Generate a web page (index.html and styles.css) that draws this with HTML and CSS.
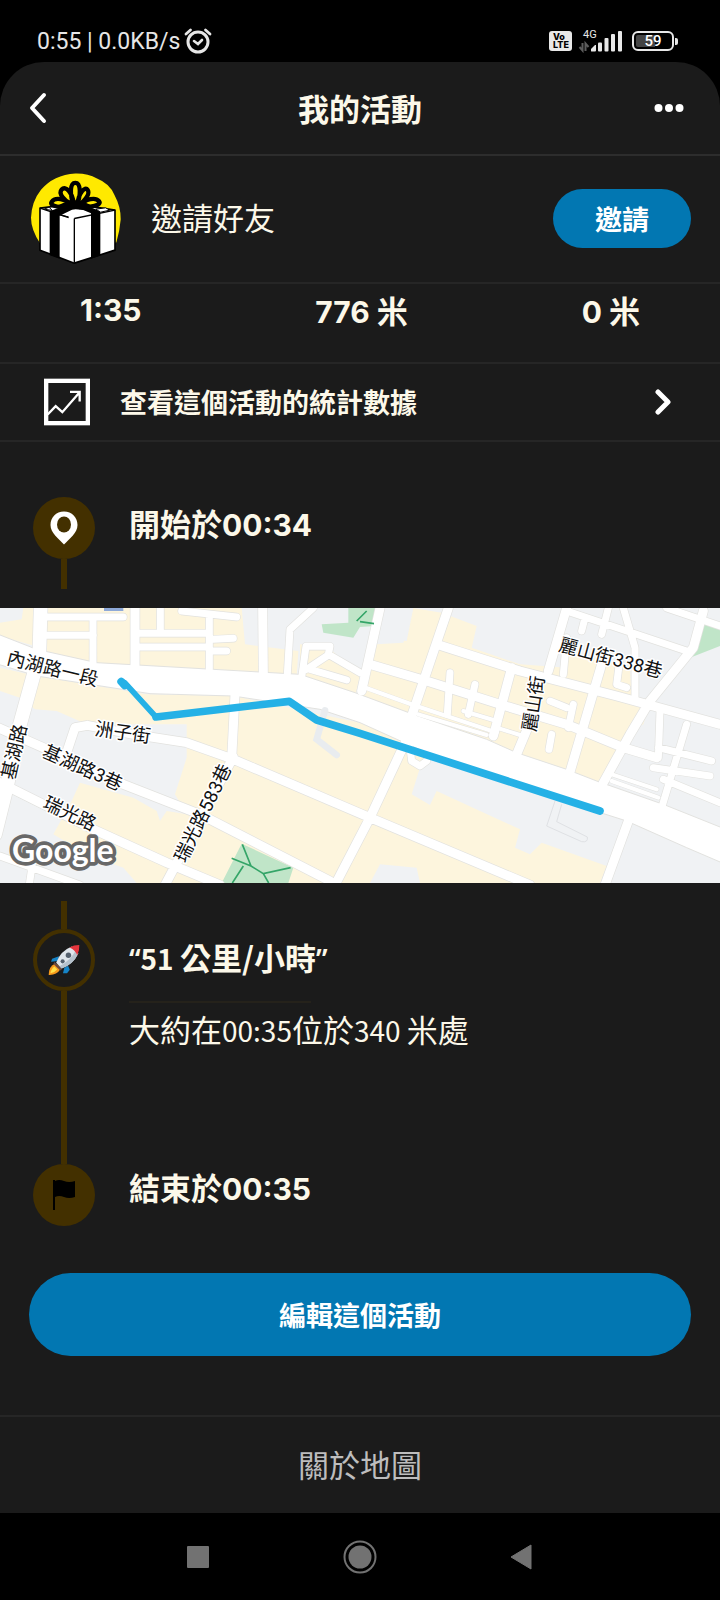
FILE: index.html
```html
<!DOCTYPE html>
<html lang="zh-Hant">
<head>
<meta charset="utf-8">
<meta name="viewport" content="width=device-width, initial-scale=1">
<title>我的活動</title>
<link rel="stylesheet" href="styles.css">
</head>
<body>
<div class="status">
  <div class="status-left">
    <span>0:55 | 0.0KB/s</span>
    <svg width="28" height="26" viewBox="0 0 28 26" fill="none" stroke="#e6e6e6" stroke-width="3" stroke-linecap="round"><circle cx="14" cy="14" r="10"/><path d="M10 13l4 3 4-4" stroke-width="2.6"/><path d="M2 6l4.500-4M26 6l-4.500-4" stroke-width="2.800"/></svg>
  </div>
  <div class="status-right">
    <span class="volte"><span>Vo</span><span>LTE</span></span>
    <svg class="signal" width="46" height="24" viewBox="0 0 46 24">
      <text x="5" y="9" class="signal-text">4G</text>
      <g fill="#e8e8e8"><path d="M13 22v-2l4-4h1v5.500q0 1-1 1h-3q-1 0-1-.5z"/><rect x="20" y="13.500" width="4" height="9" rx="1"/><rect x="26.500" y="9" width="4" height="13.500" rx="1"/><rect x="33" y="5" width="4" height="17.500" rx="1"/><rect x="40" y="2" width="4" height="20.500" rx="1"/></g>
      <path d="M4.500 14v7.500L1.500 18M7.500 22v-7.500L10.500 18" fill="none" stroke="#5c5c5c" stroke-width="2"/>
    </svg>
    <span class="battery">59</span>
  </div>
</div>

<main class="app">
  <header class="topbar">
    <button class="icon-btn" aria-label="返回"><svg width="20" height="32" viewBox="0 0 20 32"><path d="M16 3L4 16l12 13" fill="none" stroke="#fff" stroke-width="4" stroke-linecap="round" stroke-linejoin="round"/></svg></button>
    <h1 class="title">我的活動</h1>
    <button class="icon-btn icon-btn-end" aria-label="更多"><svg width="30" height="10" viewBox="0 0 30 10" fill="#fff"><circle cx="4.500" cy="5" r="4"/><circle cx="15" cy="5" r="4"/><circle cx="25.500" cy="5" r="4"/></svg></button>
  </header>

  <section class="invite">
    <svg width="90" height="91" viewBox="92 70 270 272">
      <path d="M225 71Q262 70 290 86Q328 101 342 135Q362 172 361 210Q358 245 348 278L120 282Q92 240 92 204Q94 155 122 120Q160 75 225 71Z" fill="#ffe900"/>
      <path d="M119 175L222 162L344 181V301L222 340L119 301Z" fill="#fff" stroke="#000" stroke-width="5" stroke-linejoin="round"/>
      <path d="M148 184L200 165L215 180L178 198V327L148 316ZM272 190L238 176L258 168L300 184V317L272 327Z"/>
      <path d="M119 175L205 203M222 206V338M222 206L344 181" fill="none" stroke="#000" stroke-width="4"/>
      <path d="M132 178l24 4-10-10zM180 196l24 5M286 178l30-4 12 7-27 6z" fill="#fff" stroke="#000" stroke-width="3"/>
      <path d="M223 172C206 135 209 99 225 99S244 135 227 172M216 168C194 153 172 132 184 119S216 128 220 160M232 162C234 130 254 108 262 120S254 151 234 168M214 172C185 174 145 170 154 156S193 145 218 166M234 170C258 145 286 142 296 154S270 174 236 172" fill="none" stroke="#000" stroke-width="13"/>
      <path d="M177 165Q222 137 270 165L276 183L226 178L172 186Z"/>
    </svg>
    <span class="invite-label">邀請好友</span>
    <button class="pill">邀請</button>
  </section>

  <section class="stats">
    <span class="num">1:35</span>
    <span><b class="num">776</b> 米</span>
    <span><b class="num">0</b> 米</span>
  </section>

  <a class="stats-link" href="#">
    <svg width="46" height="48" viewBox="132 687 138 141"><rect x="138.500" y="694" width="125" height="127" fill="none" stroke="#fff" stroke-width="13"/><path d="M143 795L167 770L187 788L239 728M210 727H239V756" fill="none" stroke="#fff" stroke-width="7"/></svg>
    <span class="stats-text">查看這個活動的統計數據</span>
    <svg width="16" height="26" viewBox="0 0 16 26"><path d="M3 3l10 10L3 23" fill="none" stroke="#fff" stroke-width="5" stroke-linecap="round" stroke-linejoin="round"/></svg>
  </a>

  <section class="entry entry-start">
    <div class="rail">
      <span class="node node-solid"><svg width="28" height="34" viewBox="0 0 28 34"><path d="M14 .5C6 .5.5 6.500.5 14C.5 22 9 28 14 33.500C19 28 27.500 22 27.500 14C27.500 6.500 22 .5 14 .5Z" fill="#fff"/><ellipse cx="14" cy="13.500" rx="7" ry="8" fill="#433000"/></svg></span>
      <span class="line"></span>
    </div>
    <h2 class="entry-title">開始於<span class="num">00:34</span></h2>
  </section>

  <svg class="map" viewBox="0 21 2160 825" role="img" aria-label="地圖">
    <defs>
      <g id="r12"><path d="M1090 258L1240 312L1490 395M1255 340L1460 402M1390 330L1490 360M1490 380L1560 402M1820 515L1970 565M1835 540L1975 590"/></g>
      <g id="r20"><path d="M140 48H370M140 103H280M279 60V188M415 97H620M415 138H620M481 21V90M628 40V205M545 30L710 48M640 115L700 112M640 150L680 150M940 21L870 85L862 220M905 230L918 136H990L985 160L1080 215M985 162L920 205M930 205L1040 237M1350 215L1342 340M1425 250L1405 340M1650 300L1700 320M1720 310L1705 380M1655 400L1647 445M1700 30L2060 150M1755 50L1745 90M1825 21L1805 100M1700 110L1690 220M1870 21L1905 140V290M2000 21L2160 75M1860 170L1850 250L1880 260M1980 330L1975 470M2060 370L1985 620M1975 440L2135 480M1960 500L2130 525M1990 535L2160 605M0 765L240 852M97 790L88 850M1230 440L1235 480L1260 495L1280 480"/></g>
      <g id="r26"><path d="M405 21V200M788 21L790 215M705 280L695 475M700 468L495 852M200 455L225 380L262 373L400 400L560 425L700 475L1110 650L1590 852M-10 378L130 440L370 550L600 640L990 840M-10 540L280 685L500 785L660 852M1005 852L1110 650L1220 415M1140 21L1085 270M1345 21L1235 345M1310 130L1560 210L1850 285L2160 370M1110 190L1280 240L1500 310L1700 370L1870 440L1970 470M1700 21L1645 210M1535 200L1480 405M1600 340L1550 460M1805 190L1705 530M2110 30L2080 140L1950 300L1890 400L1810 545M1885 660L1815 852"/></g>
      <g id="r40"><path d="M122 21L118 160L60 370L20 560L-15 700"/></g>
    </defs>
    <rect y="21" width="2160" height="825" fill="#f0f2f4"/>
    <g fill="#fdf5dd">
      <path d="M0 65L65 55L70 21H105V135L0 105ZM140 21H725L735 130L895 150L890 225L140 185ZM900 130L985 140L1080 220L1065 290L900 230Z"/>
      <path d="M0 200L110 225L440 280L700 285L1080 365L1260 430L1280 480L1260 500L1235 580L1290 612L1310 570L1440 630L1560 685L1545 740L1590 760L1625 725L1820 795L1800 846H1260L1250 800L1140 790L1110 846H410L370 800L260 760L160 700L215 600L240 545L400 590L470 630L480 660L500 630L560 640L525 580L560 470V370H260L170 330L105 325L60 290L0 270Z"/>
      <path d="M1240 21L1325 35L1430 75L1415 140L1560 190L1700 200V150L1890 200L1895 290L1945 320L1930 370L1890 390L1850 480L1790 545L1080 310V250L1130 130L1210 125Z"/>
    </g>
    <path d="M1155 21H1240L1220 120L1130 110Z" fill="#f0f2f4"/>
    <path d="M965 70L1045 65V21H1132L1125 75L1080 78L1060 110L970 95ZM2115 60L2160 70V135L2070 170ZM725 728L880 800L865 846H665Z" fill="#c0e5c8"/>
    <path d="M312 21H370V30H312Z" fill="#8ea9d8"/>
    <g class="casing"><use href="#r12" stroke-width="15"/><use href="#r20" stroke-width="25"/><use href="#r26" stroke-width="31"/><use href="#r40" stroke-width="45"/></g>
    <path d="M-5 100L110 145L290 185L640 205L900 220L1065 275L1240 340L1460 415L1550 455L1700 505L1790 540L1990 610L2165 680V785L2060 740L1880 660L1660 590L1290 460L1080 365L960 325L700 285L450 278L110 225L-5 190Z" fill="#fff" stroke="#e2e2df" stroke-width="3"/>
    <g class="road"><use href="#r12" stroke-width="12"/><use href="#r20" stroke-width="21"/><use href="#r26" stroke-width="27"/><use href="#r40" stroke-width="41"/></g>
    <path d="M975 328L950 415L1010 462" fill="none" stroke="#e9ecef" stroke-width="20" stroke-linecap="round"/>
    <path d="M1665 600L1640 675L1745 722Q1765 725 1762 708L1670 662L1685 610" fill="none" stroke="#dfe1e4" stroke-width="3"/>
    <path d="M727 730L753 795L695 772M753 795L790 818L872 800M790 818L806 846M730 795L697 846M1070 60L1100 30M1080 62L1122 68" fill="none" stroke="#34a568" stroke-width="5"/>
    <g fill="none" stroke="#25b1e6" stroke-linejoin="round" stroke-linecap="round"><path d="M364 242L374 253" stroke-width="24"/><path d="M374 245L468 348" stroke-width="17"/><path d="M468 348L868 301L950 357L1080 397L1800 630" stroke-width="23"/></g>
    <g class="map-label">
      <text transform="translate(153 222) rotate(14)">內湖路一段</text>
      <text transform="translate(366 414) rotate(8)">洲子街</text>
      <text transform="translate(240 518) rotate(24)">基湖路3巷</text>
      <text transform="translate(201 655) rotate(25)">瑞光路</text>
      <text transform="translate(62 457) rotate(-77)">基湖路</text>
      <text transform="translate(626 645) rotate(-64)">瑞光路583巷</text>
      <text transform="translate(1827 190) rotate(15)">麗山街338巷</text>
      <text transform="translate(1620 311) rotate(-81)">麗山街</text>
    </g>
    <text class="map-logo" x="36" y="783">Google</text>
  </svg>

  <section class="entry entry-mid">
    <div class="rail">
      <span class="line line-short"></span>
      <span class="node node-ring"><svg width="32" height="32" viewBox="148 160 94 94">
        <path d="M180 196L160 203L157 212L178 210ZM207 224L212 236L204 246L192 246L196 230Z" fill="#1684c7"/>
        <path d="M168 218Q150 226 150 251Q174 252 183 236L178 222Z" fill="#f79a1c"/><path d="M167 226Q157 233 155 246Q168 244 175 235Z" fill="#ffe14a"/>
        <path d="M172 215Q184 180 218 167L237 188Q222 220 188 232Z" fill="#dfe5eb"/><path d="M181 226Q214 208 230 178L237 188Q222 220 188 232Z" fill="#b5c1cc"/>
        <path d="M211 170Q224 163 240 163Q241 178 234 193Q227 176 211 170Z" fill="#e5353d"/>
        <circle cx="208" cy="193" r="8" fill="#55606e"/><circle cx="191" cy="211" r="6" fill="#55606e"/><path d="M167 213L189 234L184 238L164 219Z" fill="#6b4940"/></svg></span>
      <span class="line"></span>
    </div>
    <div class="entry-body">
      <h2 class="entry-title"><span class="quote">“</span><span class="latin">51 </span>公里/小時<span class="quote">”</span></h2>
      <p class="entry-note">大約在<span class="latin">00:35</span>位於<span class="latin">340 </span>米處</p>
    </div>
  </section>

  <section class="entry entry-end">
    <div class="rail"><span class="node node-solid"><svg width="24" height="32" viewBox="0 0 24 32"><path d="M1 1h2v1q4-2 9 0t11 0v16q-6 2-11 0t-9 0v13H1z"/></svg></span></div>
    <h2 class="entry-title">結束於<span class="num">00:35</span></h2>
  </section>

  <button class="pill edit">編輯這個活動</button>
  <a class="about" href="#">關於地圖</a>
</main>

<nav class="sysnav">
  <button aria-label="最近"><svg width="34" height="34" viewBox="0 0 34 34"><rect x="5" y="6" width="22" height="22" rx="1" fill="#727272"/></svg></button>
  <button aria-label="主畫面"><svg width="34" height="34" viewBox="0 0 34 34"><circle cx="17" cy="17" r="15.500" fill="none" stroke="#727272" stroke-width="2"/><circle cx="17" cy="17" r="11.500" fill="#727272"/></svg></button>
  <button aria-label="上一頁"><svg width="34" height="34" viewBox="0 0 34 34"><path d="M7 17L27 5V29Z" fill="#727272" stroke="#727272" stroke-linejoin="round"/></svg></button>
</nav>
</body>
</html>
```
FILE: styles.css
```css
* { box-sizing: border-box; }
body {
  margin: 0;
  min-height: 100vh;
  display: flex;
  flex-direction: column;
  background: #000;
  color: #fcf8e9;
  font-family: "Noto Sans CJK TC", sans-serif;
  font-size: 31px;
}
button { border: 0; padding: 0; background: none; font: inherit; color: inherit; }
a { color: inherit; text-decoration: none; }
h1, h2, p { margin: 0; font-size: inherit; }
svg { display: block; flex: none; }

.status {
  display: flex;
  justify-content: space-between;
  align-items: center;
  height: 62px;
  padding: 20px 46px 0 37px;
  font-family: Roboto, sans-serif;
  color: #e6e6e6;
}
.status-left, .status-right { display: flex; align-items: center; }
.status-left { gap: 4px; font-size: 23px; }
.volte {
  display: flex;
  flex-direction: column;
  width: 23px;
  height: 20px;
  padding: 2px 3px 0 4px;
  margin-right: 6px;
  border-radius: 3px;
  background: #e8e8e8;
  color: #000;
  font: 800 9px/8px Inter, sans-serif;
}
.signal { margin-right: 8px; }
.signal-text { font: 11px Roboto, sans-serif; fill: #e6e6e6; }
.battery {
  position: relative;
  width: 42px;
  height: 20px;
  border: 2px solid #e8e8e8;
  border-radius: 6px;
  background: linear-gradient(90deg, #444 55%, #000 55%) content-box;
  padding: 2px;
  text-align: center;
  font-size: 15px;
  font-weight: 500;
  line-height: 13px;
  color: #fff;
}
.battery::after {
  content: "";
  position: absolute;
  right: -6px;
  top: 5px;
  width: 3px;
  height: 7px;
  border-radius: 0 2px 2px 0;
  background: #e8e8e8;
}

.app { flex: 1; background: #1b1b1b; border-radius: 44px 44px 0 0; }
.topbar {
  display: grid;
  grid-template-columns: 1fr auto 1fr;
  align-items: center;
  height: 94px;
  padding: 0 36px 0 28px;
  border-bottom: 2px solid #2d2d2d;
}
.topbar { padding-right: 28px; }
.icon-btn { display: flex; }
.icon-btn-end { justify-content: flex-end; padding-right: 8px; }
.title { font-weight: 700; line-height: 44px; }

.invite {
  display: flex;
  align-items: center;
  height: 128px;
  padding: 0 29px 2px 31px;
  border-bottom: 2px solid #262626;
}
.invite-label { flex: 1; margin-left: 30px; padding-bottom: 4px; font-weight: 400; }
.pill {
  width: 138px;
  height: 59px;
  border-radius: 42px;
  background: #0277b2;
  color: #fff;
  font-size: 27px;
  font-weight: 700;
}

.stats {
  display: flex;
  justify-content: space-between;
  align-items: flex-start;
  height: 80px;
  padding: 4px 80px 0;
  border-bottom: 2px solid #262626;
  font-weight: 700;
  line-height: 44px;
}
.num { font-family: Inter, sans-serif; font-size: 30px; font-weight: 700; }

.stats-link {
  display: flex;
  align-items: center;
  height: 78px;
  padding: 0 49px 0 44px;
  border-bottom: 2px solid #262626;
  font-size: 27px;
  font-weight: 700;
}
.stats-text { flex: 1; margin-left: 30px; padding-bottom: 2px; }

.entry { display: flex; }
.entry-start { padding-top: 55px; height: 166px; }
.entry-start .rail { height: 92px; }
.entry-mid { padding-top: 18px; height: 281px; }
.rail { display: flex; flex-direction: column; align-items: center; flex: none; width: 128px; }
.line { flex: 1; width: 6px; background: #433000; }
.line-short { flex: none; height: 28px; }
.node {
  display: flex;
  align-items: center;
  justify-content: center;
  flex: none;
  width: 62px;
  height: 62px;
  border-radius: 50%;
}
.node-solid { background: #433000; }
.node-ring { border: 4px solid #433000; }
.entry-title { height: 52px; line-height: 52px; font-weight: 700; margin-left: 1px; }
.entry-body { padding-top: 30px; }
.entry-note { position: relative; margin: 23px 0 0 1px; line-height: 46px; }
.entry-note::before {
  content: "";
  position: absolute;
  top: -5px;
  left: 0;
  width: 182px;
  height: 2px;
  background: #25221b;
}
.entry-end .entry-title { line-height: 46px; }
.latin { font-size: 28px; }
.quote { font-family: "Noto Sans", sans-serif; font-size: 28px; font-weight: 600; }

.map { width: 100%; height: auto; }
.casing, .road { fill: none; stroke-linejoin: round; stroke-linecap: round; }
.casing { stroke: #e2e2df; }
.road { stroke: #fff; }
.map-label {
  font-family: Roboto, "Noto Sans CJK TC", sans-serif;
  font-size: 56px;
  text-anchor: middle;
  fill: #111;
  stroke: #fff;
  stroke-width: 9px;
  stroke-linejoin: round;
  paint-order: stroke;
}
.map-logo {
  font: 700 96px Lato, sans-serif;
  fill: #fff;
  stroke: #686868;
  stroke-width: 22px;
  stroke-linejoin: round;
  paint-order: stroke;
}

.edit { display: block; width: auto; min-width: calc(100% - 58px); height: 83px; margin: 47px 29px 59px; }
.about {
  display: flex;
  align-items: center;
  justify-content: center;
  height: 98px;
  padding-bottom: 4px;
  border-top: 2px solid #262626;
  color: #bdbdbd;
}
.sysnav {
  display: flex;
  justify-content: center;
  align-items: center;
  gap: 127px;
  height: 87px;
}
```
